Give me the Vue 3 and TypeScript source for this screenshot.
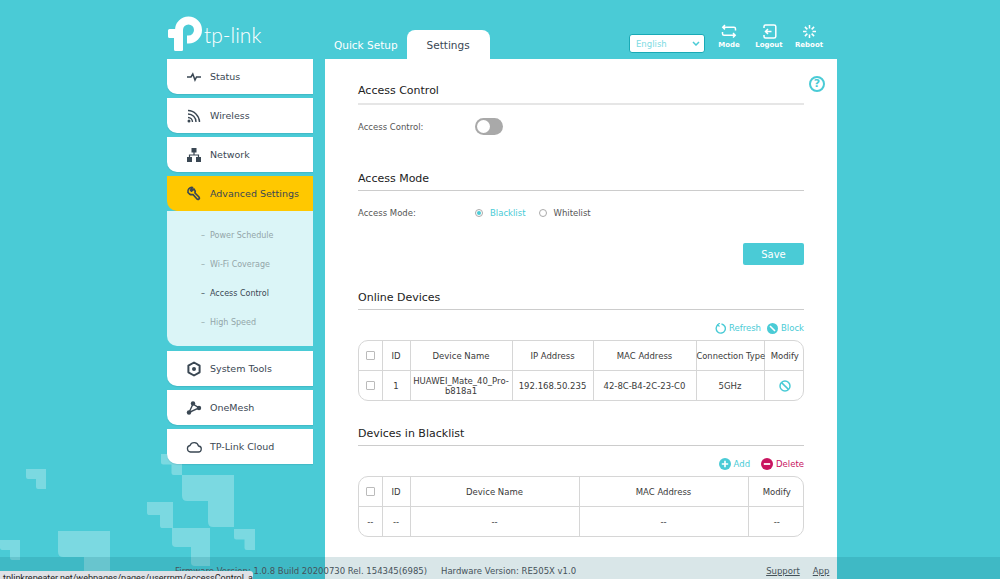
<template>
  <div class="page">
    <svg class="deco" width="270" height="130" viewBox="0 449 270 130">
      <path
        v-for="(d, i) in decoShapes"
        :key="i"
        :d="d"
        fill="#fff"
        fill-opacity="0.27"
      />
    </svg>

    <div class="shell">
      <header class="top">
        <div class="logo">
          <svg width="37" height="36" viewBox="0 0 37 36">
            <path d="M13 15.5V14a9.5 9.5 0 1 1 9.500 9.500H21" fill="none" stroke="#fff" stroke-width="8" />
            <path d="M2 14.500Q2 13 3.500 13H17V34Q17 35 15.500 35H9.500Q8 35 8 33.500V22H3.500Q2 22 2 20.500Z" fill="#fff" />
          </svg>
          <span class="logo-text">tp-link</span>
        </div>
        <nav class="tabs">
          <span class="tab">Quick Setup</span>
          <span class="tab tab-on">Settings</span>
        </nav>
        <div class="lang">
          <span>English</span>
          <svg width="8" height="5" viewBox="0 0 8 5"><path d="M1 1l3 3 3-3" fill="none" stroke="#4acbd6" stroke-width="1.500" /></svg>
        </div>
        <div class="actions">
          <div class="action">
            <svg width="16" height="15" viewBox="0 0 16 15" fill="none" stroke="#fff" stroke-width="1.500">
              <path d="M4 1L1.800 3.200 4 5.400M2 3.200H13Q14.500 3.200 14.500 4.700V6.500M12 13.500l2.200-2.200L12 9.100M14 11.300H3Q1.500 11.300 1.500 9.800V8" />
            </svg>
            <span>Mode</span>
          </div>
          <div class="action">
            <svg width="15" height="15" viewBox="0 0 15 15" fill="none" stroke="#fff" stroke-width="1.500">
              <path d="M2 4V2.500Q2 1 3.500 1H12Q13.800 1 13.800 2.500V12.500Q13.800 14 12 14H3.500Q2 14 2 12.500V11" />
              <path d="M9.500 7.500H3.500M6 5L3.500 7.500 6 10" />
            </svg>
            <span>Logout</span>
          </div>
          <div class="action">
            <svg width="15" height="15" viewBox="0 0 15 15" fill="none" stroke="#fff" stroke-width="1.500">
              <path d="M7.500 1v3.500M7.500 10.500V14M1 7.500h3.500M10.500 7.500H14M2.900 2.900l2.500 2.500M9.600 9.600l2.500 2.500M2.900 12.100l2.500-2.500M9.600 5.400l2.500-2.500" />
            </svg>
            <span>Reboot</span>
          </div>
        </div>
      </header>

      <div class="body">
        <aside class="side">
          <template v-for="item in navItems" :key="item.label">
            <div class="nav-item" :class="{ 'nav-on': item.open }">
              <svg class="nav-icon" width="16" height="16" viewBox="0 0 16 16" v-html="item.icon"></svg>
              <span>{{ item.label }}</span>
            </div>
            <ul v-if="item.open" class="sub">
              <li v-for="s in subItems" :key="s" :class="{ 'sub-on': s === 'Access Control' }">
                <i>–</i>{{ s }}
              </li>
            </ul>
          </template>
        </aside>

        <main class="panel">
          <span class="help">?</span>

          <section class="sec sec-first">
            <h2 class="title title-thick">Access Control</h2>
            <div class="field">
              <label>Access Control:</label>
              <span class="switch"><b></b></span>
            </div>
          </section>

          <section class="sec sec-mode">
            <h2 class="title">Access Mode</h2>
            <div class="field field-mode">
              <label>Access Mode:</label>
              <span class="radio radio-on"><b></b></span>
              <span class="radio-text radio-text-on">Blacklist</span>
              <span class="radio radio-off"></span>
              <span class="radio-text">Whitelist</span>
            </div>
            <div class="save-row"><button class="save">Save</button></div>
          </section>

          <section class="sec sec-online">
            <h2 class="title">Online Devices</h2>
            <div class="tools">
              <span class="tool">
                <svg width="11" height="11" viewBox="0 0 11 11" fill="none" stroke="#4acbd6" stroke-width="1.400">
                  <path d="M3.200 1.700A4.600 4.600 0 1 0 6.500 1" />
                  <path d="M4.800 0L2.600 1.700 4.500 3.500" stroke-width="1.100" />
                </svg>
                Refresh
              </span>
              <span class="tool">
                <svg width="11" height="11" viewBox="0 0 11 11">
                  <circle cx="5.500" cy="5.500" r="5.500" fill="#4acbd6" />
                  <path d="M3 3l5 5" stroke="#fff" stroke-width="1.600" />
                </svg>
                Block
              </span>
            </div>
            <div class="table-box">
              <table>
                <colgroup>
                  <col v-for="w in onlineCols" :key="w" :style="{ width: w + 'px' }" />
                </colgroup>
                <thead>
                  <tr>
                    <th><span class="check"></span></th>
                    <th>ID</th>
                    <th>Device Name</th>
                    <th>IP Address</th>
                    <th>MAC Address</th>
                    <th class="tight">Connection Type</th>
                    <th>Modify</th>
                  </tr>
                </thead>
                <tbody>
                  <tr>
                    <td><span class="check"></span></td>
                    <td>1</td>
                    <td class="wrap">HUAWEI_Mate_40_Pro-b818a1</td>
                    <td>192.168.50.235</td>
                    <td>42-8C-B4-2C-23-C0</td>
                    <td>5GHz</td>
                    <td>
                      <svg class="ban" width="12" height="12" viewBox="0 0 12 12" fill="none" stroke="#4acbd6" stroke-width="1.500">
                        <circle cx="6" cy="6" r="5" />
                        <path d="M2.600 2.600l6.800 6.800" />
                      </svg>
                    </td>
                  </tr>
                </tbody>
              </table>
            </div>
          </section>

          <section class="sec sec-black">
            <h2 class="title">Devices in Blacklist</h2>
            <div class="tools tools-black">
              <span class="tool">
                <svg width="12" height="12" viewBox="0 0 12 12">
                  <circle cx="6" cy="6" r="6" fill="#4acbd6" />
                  <path d="M6 2.800v6.400M2.800 6h6.400" stroke="#fff" stroke-width="1.600" />
                </svg>
                Add
              </span>
              <span class="tool tool-del">
                <svg width="12" height="12" viewBox="0 0 12 12">
                  <circle cx="6" cy="6" r="6" fill="#c9145f" />
                  <path d="M2.800 6h6.400" stroke="#fff" stroke-width="1.800" />
                </svg>
                Delete
              </span>
            </div>
            <div class="table-box">
              <table>
                <colgroup>
                  <col v-for="w in blackCols" :key="w" :style="{ width: w + 'px' }" />
                </colgroup>
                <thead>
                  <tr>
                    <th><span class="check"></span></th>
                    <th>ID</th>
                    <th>Device Name</th>
                    <th>MAC Address</th>
                    <th>Modify</th>
                  </tr>
                </thead>
                <tbody>
                  <tr>
                    <td v-for="n in 5" :key="n">--</td>
                  </tr>
                </tbody>
              </table>
            </div>
          </section>
        </main>
      </div>
    </div>

    <footer class="foot">
      <span class="fw">Firmware Version: 1.0.8 Build 20200730 Rel. 154345(6985)</span>
      <span class="hw">Hardware Version: RE505X v1.0</span>
      <span class="links"><a>Support</a><a>App</a></span>
    </footer>
    <div class="bubble">tplinkrepeater.net/webpages/pages/userrpm/accessControl_adv.html</div>
  </div>
</template>

<script setup lang="ts">
interface NavItem {
  label: string
  icon: string
  open?: boolean
}

const C = '#3a4753'

const navItems: NavItem[] = [
  {
    label: 'Status',
    icon: `<path d="M1 8h4l1.800-3 2.200 6 1.500-3H15" fill="none" stroke="${C}" stroke-width="1.500"/>`
  },
  {
    label: 'Wireless',
    icon: `<g fill="none" stroke="${C}" stroke-width="1.400"><path d="M2 2.500C8 2.500 13.500 8 13.500 14"/><path d="M2 6C6.500 6 10 9.500 10 14"/><path d="M2 9.500C4.500 9.500 6.500 11.500 6.500 14"/></g><circle cx="3" cy="13" r="1.500" fill="${C}"/>`
  },
  {
    label: 'Network',
    icon: `<g fill="${C}"><rect x="5.500" y="1" width="5" height="4.500"/><rect x="1" y="10" width="5" height="5"/><rect x="10" y="10" width="5" height="5"/></g><path d="M8 5v3M3.500 10V8h9v2" fill="none" stroke="${C}" stroke-width="1.200"/>`
  },
  {
    label: 'Advanced Settings',
    open: true,
    icon: `<path d="M6.500 1.500A4 4 0 0 0 2 6.500L3.500 8a4 4 0 0 0 3.500.500L11 13c1 1.300 3.300-.500 2-2L9 7a4 4 0 0 0-1-4L5.500 5.200 4.500 4.200Z" fill="none" stroke="${C}" stroke-width="1.700" stroke-linejoin="round"/>`
  },
  {
    label: 'System Tools',
    icon: `<path d="M8 1.500l5.600 3.200v6.600L8 14.500l-5.600-3.200V4.700Z" fill="none" stroke="${C}" stroke-width="2" stroke-linejoin="round"/><circle cx="8" cy="8" r="2" fill="${C}"/>`
  },
  {
    label: 'OneMesh',
    icon: `<path d="M7 4L3 12.500 13 8Z" fill="none" stroke="${C}" stroke-width="1.400"/><circle cx="7" cy="3.500" r="2.200" fill="${C}"/><circle cx="3" cy="12.500" r="2.200" fill="${C}"/><circle cx="13" cy="8" r="2.200" fill="${C}"/>`
  },
  {
    label: 'TP-Link Cloud',
    icon: `<path d="M4.500 13H12a3 3 0 0 0 .500-6A4.500 4.500 0 0 0 4 6.500 3.300 3.300 0 0 0 4.500 13Z" fill="none" stroke="${C}" stroke-width="1.300"/>`
  }
]

const subItems = ['Power Schedule', 'Wi-Fi Coverage', 'Access Control', 'High Speed']

const onlineCols = [23, 28, 102, 81, 103, 68, 41]
const blackCols = [23, 28, 169, 169, 57]

// pale corner blocks behind the menu, all the same L shape at different sizes
const corner = (x: number, y: number, s: number) => {
  const k = s / 2
  const r = s * 0.1
  return `M${x} ${y}H${x + s}V${y + s}H${x + k + r}Q${x + k} ${y + s} ${x + k} ${y + s - r}V${y + k}H${x + r}Q${x} ${y + k} ${x} ${y + k - r}Z`
}

const decoShapes = [
  corner(26, 469, 20),
  corner(161, 454, 21),
  corner(182, 475, 52),
  corner(147, 502, 26),
  corner(172, 528, 38),
  corner(234, 529, 21),
  corner(58, 531, 52),
  corner(0, 540, 20)
]
</script>

<style>
html,
body {
  margin: 0;
  background: #4acbd6;
}
</style>

<style scoped>
.page {
  position: relative;
  height: 579px;
  overflow: hidden;
  background: #4acbd6;
  font-family: 'DejaVu Sans', Verdana, sans-serif;
  color: #3a4753;
}
.deco {
  position: absolute;
  left: 0;
  bottom: 0;
}
.shell {
  position: relative;
  width: 670px;
  margin-left: 167px;
}
.top {
  display: flex;
  align-items: flex-end;
  height: 59px;
  width: 670px;
}
.logo {
  display: flex;
  align-items: flex-end;
  width: 158px;
  height: 44px;
  padding-bottom: 7px;
  box-sizing: border-box;
}
.logo svg {
  margin-left: -1px;
  flex: none;
}
.logo-text {
  margin: 0 0 6px 1px;
  font-family: Lato, sans-serif;
  font-size: 21px;
  font-weight: 300;
  line-height: 22px;
  color: #fff;
}
.tabs {
  display: flex;
  align-items: flex-end;
  width: 304px;
}
.tab {
  display: flex;
  align-items: center;
  justify-content: center;
  height: 29px;
  padding: 0 9px;
  font-size: 10.500px;
  color: #fff;
}
.tab-on {
  width: 83px;
  padding: 0;
  box-sizing: border-box;
  background: #fff;
  border-radius: 8px 8px 0 0;
  color: #3a4753;
}
.lang {
  display: flex;
  align-items: center;
  justify-content: space-between;
  width: 76px;
  height: 19px;
  margin: 0 0 6px 0;
  padding: 0 4px 0 6px;
  box-sizing: border-box;
  background: #fff;
  border: 1px solid #19aab6;
  border-radius: 3px;
  font-size: 8.500px;
  color: #7ddbe3;
}
.actions {
  display: flex;
  margin: 0 0 10px 4px;
}
.action {
  display: flex;
  flex-direction: column;
  align-items: center;
  width: 40px;
  gap: 2px;
  font-size: 7px;
  font-weight: 700;
  color: #fff;
}
.body {
  display: flex;
  align-items: flex-start;
  gap: 12px;
}
.side {
  display: flex;
  flex-direction: column;
  width: 146px;
  flex: none;
}
.nav-item {
  display: flex;
  align-items: center;
  height: 35px;
  margin-bottom: 4px;
  padding-left: 19px;
  background: #fff;
  border-radius: 0 0 0 10px;
  box-shadow: 0 1px 1px rgba(0, 60, 80, 0.12);
  font-size: 9.500px;
}
.nav-icon {
  flex: none;
  margin-right: 8px;
}
.nav-on {
  margin-bottom: 0;
  background: #ffc800;
  box-shadow: none;
}
.sub {
  margin: 0 0 5px;
  padding: 10px 0;
  height: 135px;
  box-sizing: border-box;
  background: #dbf5f7;
  border-radius: 0 0 0 10px;
  list-style: none;
}
.sub li {
  display: flex;
  align-items: center;
  height: 29px;
  padding-left: 34px;
  font-size: 8px;
  color: #93a5a9;
}
.sub li i {
  width: 9px;
  font-style: normal;
}
.sub-on {
  color: #3a4753 !important;
}
.panel {
  position: relative;
  width: 512px;
  height: 520px;
  padding: 0 33px;
  box-sizing: border-box;
  background: #fff;
}
.help {
  position: absolute;
  top: 17px;
  right: 12px;
  width: 16px;
  height: 16px;
  box-sizing: border-box;
  border: 2px solid #4acbd6;
  border-radius: 50%;
  font-size: 11px;
  font-weight: 700;
  line-height: 12px;
  text-align: center;
  color: #4acbd6;
}
.sec-first {
  padding-top: 25px;
}
.sec-mode {
  padding-top: 37px;
}
.sec-online {
  padding-top: 26px;
}
.sec-black {
  padding-top: 26px;
}
.title {
  margin: 0;
  height: 18px;
  line-height: 14px;
  border-bottom: 1px solid #ccc;
  font-size: 11px;
  font-weight: 400;
  color: #222;
}
.title-thick {
  height: 19px;
  border-bottom: 2px solid #e6e6e6;
}
.field {
  display: flex;
  align-items: center;
  height: 17px;
  margin-top: 13px;
  font-size: 8.500px;
  color: #555;
}
.field label {
  width: 117px;
  flex: none;
}
.switch {
  display: block;
  width: 28px;
  height: 17px;
  box-sizing: border-box;
  padding: 2px;
  background: #a9a9a9;
  border-radius: 9px;
}
.switch b {
  display: block;
  width: 13px;
  height: 13px;
  background: #fff;
  border-radius: 50%;
}
.field-mode {
  margin-top: 13px;
}
.radio {
  display: flex;
  align-items: center;
  justify-content: center;
  width: 8px;
  height: 8px;
  box-sizing: border-box;
  border: 1px solid #aaa;
  border-radius: 50%;
}
.radio b {
  width: 4px;
  height: 4px;
  background: #4acbd6;
  border-radius: 50%;
}
.radio-on {
  margin-right: 7px;
  margin-left: 0;
}
.radio-off {
  margin-left: 14px;
  margin-right: 6px;
}
.radio-text-on {
  color: #4acbd6;
}
.save-row {
  display: flex;
  justify-content: flex-end;
  margin-top: 22px;
}
.save {
  width: 61px;
  height: 22px;
  padding: 0;
  background: #4acbd6;
  border: 0;
  border-radius: 2px;
  font: 10px 'DejaVu Sans', sans-serif;
  color: #fff;
}
.tools {
  display: flex;
  justify-content: flex-end;
  gap: 6px;
  height: 12px;
  margin: 12px 0 6px;
}
.tools-black {
  margin: 12px 0 6px;
  gap: 11px;
}
.tool {
  display: flex;
  align-items: center;
  gap: 3px;
  font-size: 8.500px;
  color: #4acbd6;
}
.tool-del {
  color: #c9145f;
}
.table-box {
  border: 1px solid #d6d6d6;
  border-radius: 10px;
  overflow: hidden;
}
table {
  width: 444px;
  table-layout: fixed;
  border-collapse: collapse;
  font-size: 8.500px;
  color: #3a3a3a;
}
th,
td {
  height: 29px;
  padding: 0;
  border: 1px solid #d6d6d6;
  font-weight: 400;
  text-align: center;
  line-height: 10px;
}
tr:first-child th {
  border-top: 0;
}
tbody tr:last-child td {
  border-bottom: 0;
}
th:first-child,
td:first-child {
  border-left: 0;
}
th:last-child,
td:last-child {
  border-right: 0;
}
.tight {
  font-size: 8.300px;
  white-space: nowrap;
}
.wrap {
  padding: 0 2px;
  word-break: break-all;
}
.check {
  display: block;
  width: 7px;
  height: 7px;
  margin: 0 auto;
  border: 1px solid #bbb;
  border-radius: 1px;
}
.ban {
  display: block;
  margin: 0 auto;
}
.foot {
  position: absolute;
  left: 0;
  right: 0;
  bottom: 0;
  display: flex;
  align-items: center;
  height: 22px;
  padding: 6px 0 0 175px;
  box-sizing: border-box;
  background: rgba(0, 90, 100, 0.15);
  font-size: 8.500px;
  color: #45525a;
}
.fw {
  width: 266px;
  white-space: nowrap;
}
.links {
  display: flex;
  gap: 13px;
  margin-left: 190px;
}
.links a {
  text-decoration: underline;
}
.bubble {
  position: absolute;
  left: 0;
  top: 571px;
  width: 253px;
  height: 12px;
  padding: 2px 0 0 3px;
  box-sizing: border-box;
  background: #dee1e6;
  border-radius: 0 3px 0 0;
  font-family: Roboto, sans-serif;
  font-size: 9px;
  line-height: 11px;
  white-space: nowrap;
  overflow: hidden;
  color: #222;
}
</style>
